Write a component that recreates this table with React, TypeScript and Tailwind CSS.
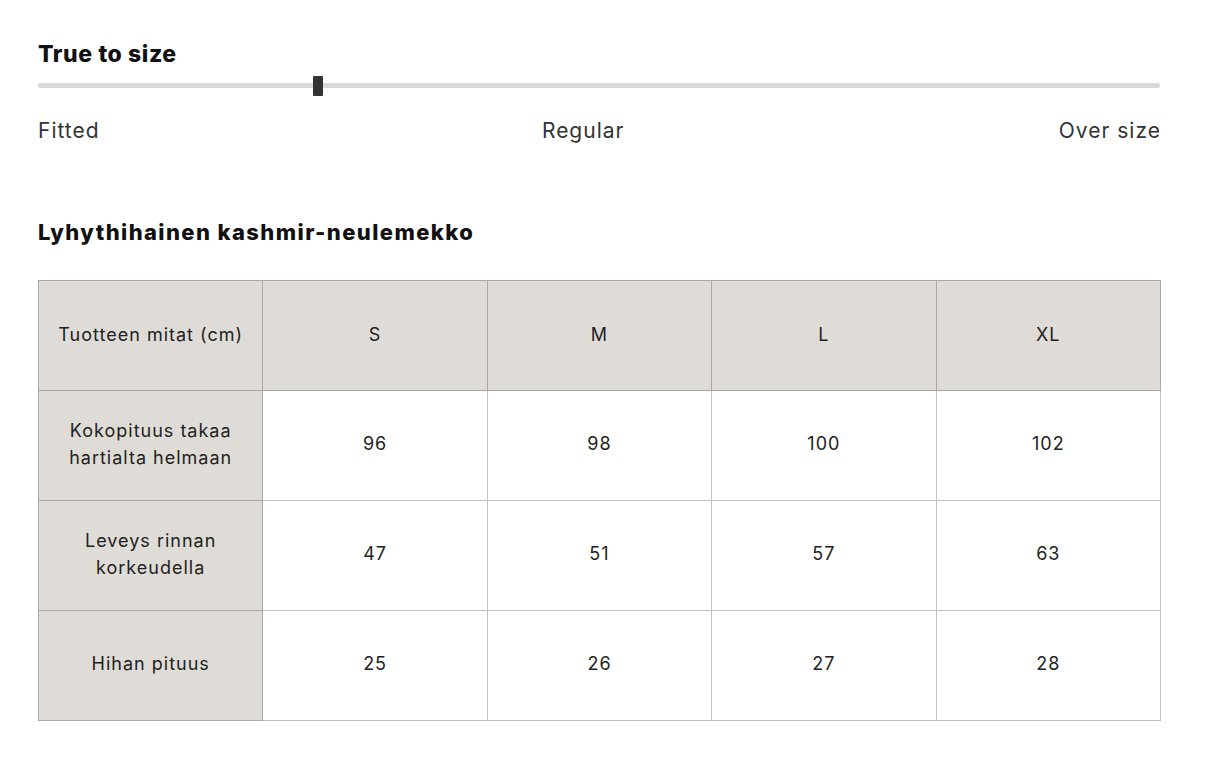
import React from 'react';

const sizes = ['S', 'M', 'L', 'XL'];

const rows = [
    { label: 'Kokopituus takaa hartialta helmaan', values: ['96', '98', '100', '102'] },
    { label: 'Leveys rinnan korkeudella', values: ['47', '51', '57', '63'] },
    { label: 'Hihan pituus', values: ['25', '26', '27', '28'] },
];

const App: React.FC = () => {
    return (
        <div className="w-[1220px] h-[768px] bg-white px-[38px] pt-[40px] font-['Inter',sans-serif] text-[#222]">
            {/* Fit slider */}
            <h2 className="text-[23px] font-extrabold leading-[28px] text-[#111] tracking-[0.6px]">True to size</h2>
            <div className="relative mt-[8px] h-[20px] w-[1122px]">
                <div className="absolute left-0 right-0 top-[7px] h-[5px] rounded-full bg-[#d9d9d9]" />
                <div className="absolute left-[275px] top-0 h-[20px] w-[10px] rounded-[1px] bg-[#333]" />
            </div>
            <div className="mt-[22px] flex w-[1122px] justify-between text-[21px] leading-[26px] tracking-[1px] text-[#333]">
                <span>Fitted</span>
                <span className="pl-[8px]">Regular</span>
                <span className="-mr-[1px]">Over size</span>
            </div>

            {/* Size table */}
            <h3 className="mt-[74px] text-[22px] font-extrabold leading-[28px] text-[#111] tracking-[1.4px]">
                Lyhythihainen kashmir-neulemekko
            </h3>
            <table className="mt-[34px] w-[1123px] table-fixed border-collapse text-[18px] leading-[27px] tracking-[1px]">
                <thead>
                    <tr className="h-[110px] bg-[#dfdcd7]">
                        <th className="border border-[#aba8a3] pb-[3px] font-normal">Tuotteen mitat (cm)</th>
                        {sizes.map((s) => (
                            <th key={s} className="border border-[#aba8a3] pb-[3px] font-normal">
                                {s}
                            </th>
                        ))}
                    </tr>
                </thead>
                <tbody>
                    {rows.map((r) => (
                        <tr key={r.label} className="h-[110px]">
                            <td className="border border-[#aba8a3] bg-[#dfdcd7] px-[24px] pb-[4px] text-center">{r.label}</td>
                            {r.values.map((v, i) => (
                                <td key={i} className="border border-[#c4c1bc] pb-[4px] text-center">
                                    {v}
                                </td>
                            ))}
                        </tr>
                    ))}
                </tbody>
            </table>
        </div>
    );
};

export default App;
